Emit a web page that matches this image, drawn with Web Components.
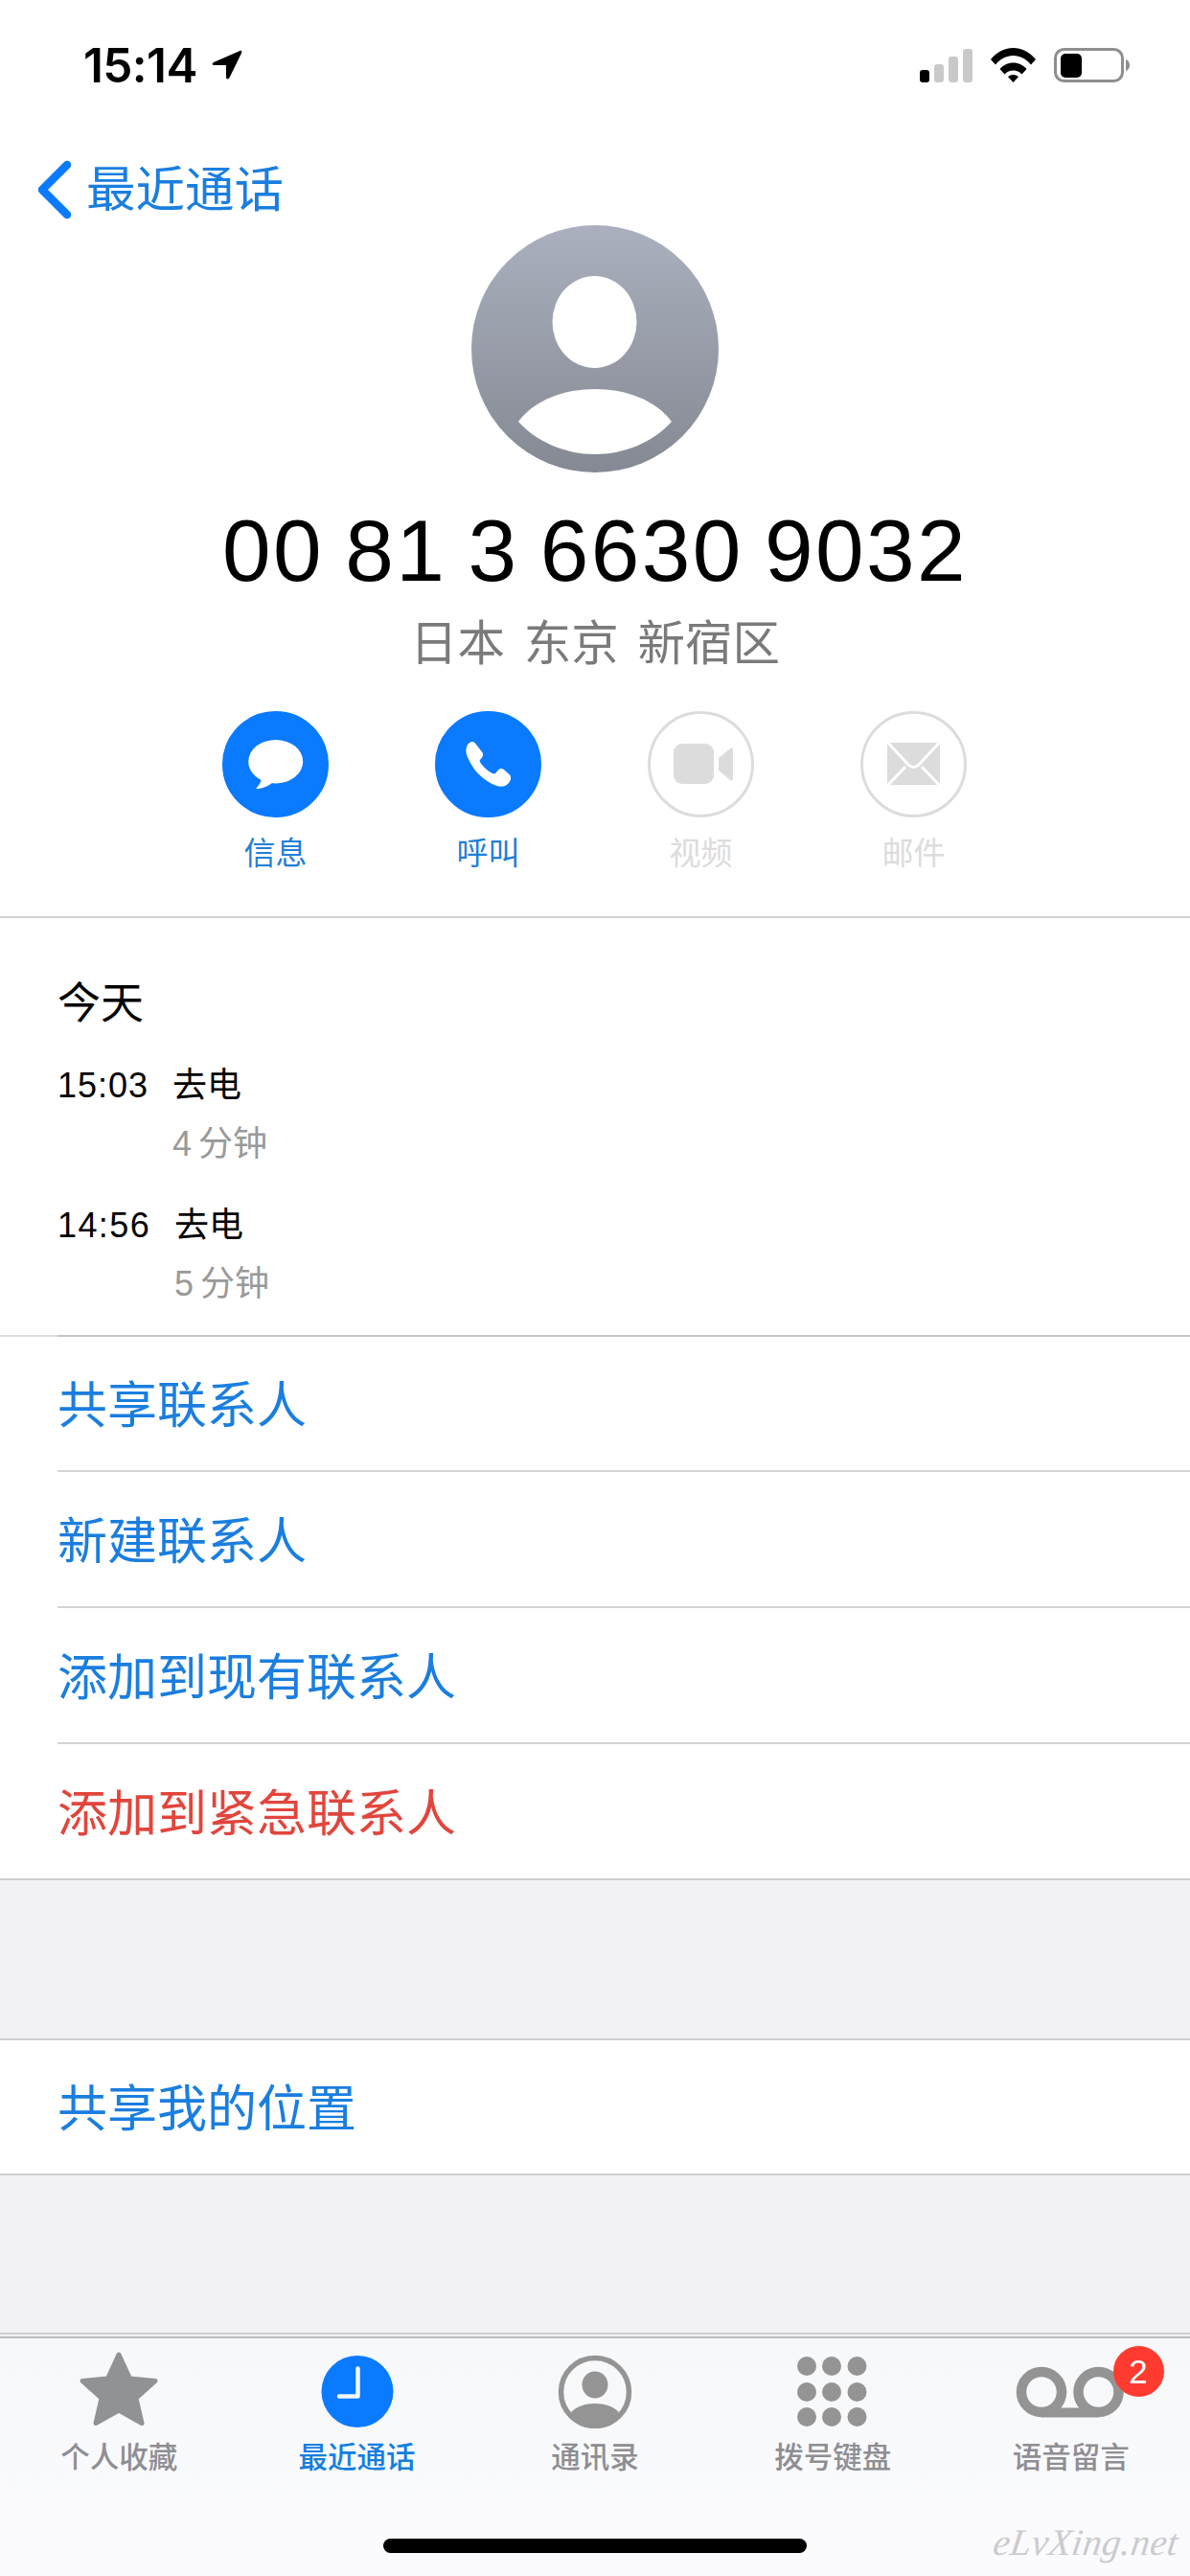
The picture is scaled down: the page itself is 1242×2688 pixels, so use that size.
<!DOCTYPE html>
<html lang="zh-CN">
<head>
<meta charset="utf-8">
<title>Contact</title>
<style>
html,body{margin:0;padding:0;background:#fff}
body{font-family:"Liberation Sans","Noto Sans CJK SC",sans-serif}
</style>
</head>
<body>
<phone-screen>
  <status-bar time="15:14"></status-bar>
  <back-nav>最近通话</back-nav>
  <contact-head number="00 81 3 6630 9032" place="日本 东京 新宿区">
    <action-button label="信息" on>
      <svg viewBox="0 0 111 111" width="111" height="111"><ellipse cx="55.7" cy="52.7" rx="28.5" ry="22.8" fill="#fff"/><path d="M41 68C41 74 38 78 35.5 80C35 81 36 81.5 38 81C43 80.5 48 78 52 75Z" fill="#fff"/></svg>
    </action-button>
    <action-button label="呼叫" on>
      <svg viewBox="0 0 111 111" width="111" height="111"><path fill="#fff" d="M33.5 36C35 32.5 39 30.5 41.5 33L49 42.5C50.5 44.5 50.5 46.5 49 48.5L47 51C46.5 52 46.8 53 47.5 54C51 59 55 62.5 60 65C61.5 65.7 62.5 65.5 63.5 64.5L66 61.5C67.5 59.8 69.5 59.5 71.5 60.8L77.5 66C80 68.5 79.5 72 77 75C73.5 79 69 79.5 64.5 78C50 73 39 61 33.5 47C32 43 32 39.5 33.5 36Z"/></svg>
    </action-button>
    <action-button label="视频">
      <svg viewBox="0 0 111 111" width="111" height="111"><rect x="27" y="34" width="42" height="42" rx="9" fill="#dcdcdc"/><path fill="#dcdcdc" d="M74 49L86 39C88 37.5 89 38.5 89 41V70C89 72.5 88 73.5 86 72L74 62Z"/></svg>
    </action-button>
    <action-button label="邮件">
      <svg viewBox="0 0 111 111" width="111" height="111"><rect x="28" y="33" width="55" height="44" rx="2" fill="#dcdcdc"/><path d="M26 30L50 56Q55.5 61 61 56L85 30M27 79L47 58M84 79L64 58" fill="none" stroke="#fff" stroke-width="3"/></svg>
    </action-button>
  </contact-head>
  <call-log heading="今天">
    <call-row kind="去电"><span slot="time">15:03</span>4 分钟</call-row>
    <call-row kind="去电"><span slot="time" style="letter-spacing:1.4px">14:56</span>5 分钟</call-row>
  </call-log>
  <action-list>
    <list-row>共享联系人</list-row>
    <list-row>新建联系人</list-row>
    <list-row>添加到现有联系人</list-row>
    <list-row danger last>添加到紧急联系人</list-row>
  </action-list>
  <action-list separate>
    <list-row last>共享我的位置</list-row>
  </action-list>
  <tab-bar>
    <tab-item label="个人收藏">
      <svg viewBox="0 0 124 84" width="124" height="84"><path transform="translate(21 4)" fill="#909296" stroke="#909296" stroke-width="5" stroke-linejoin="round" d="M41 3L52.5 28L79 30.5L59 48.5L65 74.5L41 61L17 74.5L23 48.5L3 30.5L29.5 28Z"/></svg>
    </tab-item>
    <tab-item label="最近通话" on>
      <svg viewBox="0 0 124 84" width="124" height="84"><circle cx="62" cy="45.5" r="37.5" fill="#0a7aff"/><path d="M62.5 21.5V50.5H43" fill="none" stroke="#fff" stroke-width="4.5" stroke-linecap="round" stroke-linejoin="round" opacity=".95"/></svg>
    </tab-item>
    <tab-item label="通讯录">
      <svg viewBox="0 0 124 84" width="124" height="84"><circle cx="62" cy="46" r="35.5" fill="none" stroke="#949494" stroke-width="5.5"/><ellipse cx="62" cy="38.5" rx="13.5" ry="14" fill="#949494"/><path fill="#949494" d="M37 67C43 61 52 58 62 58C72 58 81 61 87 67C81 76 72 81 62 81C52 81 43 76 37 67Z"/></svg>
    </tab-item>
    <tab-item label="拨号键盘">
      <svg viewBox="0 0 124 84" width="124" height="84" fill="#949494"><circle cx="35" cy="19" r="10"/><circle cx="61" cy="19" r="10"/><circle cx="87.5" cy="19" r="10"/><circle cx="35" cy="46" r="10"/><circle cx="61" cy="46" r="10"/><circle cx="87.5" cy="46" r="10"/><circle cx="35" cy="72" r="10"/><circle cx="61" cy="72" r="10"/><circle cx="87.5" cy="72" r="10"/></svg>
    </tab-item>
    <tab-item label="语音留言" badge="2">
      <svg viewBox="0 0 124 84" width="124" height="84"><g fill="none" stroke="#949494"><circle cx="31" cy="46" r="21" stroke-width="10.5"/><circle cx="90.5" cy="46" r="21" stroke-width="10.5"/><path d="M31 67.5H90.5" stroke-width="10"/></g></svg>
    </tab-item>
  </tab-bar>
  <home-bar></home-bar>
  <water-mark>eLvXing.net</water-mark>
</phone-screen>

<script>
const CJK = '"Liberation Sans","Noto Sans CJK SC",sans-serif';
function make(name, css, html, setup) {
  customElements.define(name, class extends HTMLElement {
    constructor() {
      super();
      const root = this.attachShadow({ mode: 'open' });
      const t = document.createElement('template');
      t.innerHTML = '<style>' + css + '</style>' + (typeof html === 'function' ? html(this) : html);
      root.appendChild(t.content.cloneNode(true));
    }
    connectedCallback() {
      if (setup) setup(this, this.shadowRoot);
    }
  });
}

make('phone-screen',
  `:host{display:flex;flex-direction:column;position:relative;width:1242px;height:2688px;overflow:hidden;background:#f1f1f6;font-family:${CJK}}`,
  `<slot></slot>`);

make('status-bar',
  `:host{display:flex;justify-content:space-between;align-items:flex-start;height:136px;box-sizing:border-box;padding:50px 62px 0 87px;background:#fff}
   .time{display:flex;align-items:flex-start;gap:15px}
   .t{font:600 49.5px/37px Inter,sans-serif;color:#000;letter-spacing:-.6px}
   .icons{display:flex;gap:19px;align-items:flex-start}
   svg{display:block}`,
  `<div class="time"><span class="t"></span>
    <svg width="33" height="33" viewBox="0 0 33 33"><path fill="#000" d="M29.5 3L2 15C0 16 .5 18 2.5 18L15 18L15 30.5C15 33 17.5 33 18.5 31L31 5.5C32 3.5 31 2.5 29.5 3Z"/></svg></div>
   <div class="icons">
    <svg width="55" height="36" viewBox="0 0 55 36"><rect x="0" y="23" width="10" height="13" rx="3" fill="#000"/><rect x="15" y="17" width="10" height="19" rx="3" fill="#c9c9c9"/><rect x="30" y="9" width="10" height="27" rx="3" fill="#c9c9c9"/><rect x="45" y="1" width="10" height="35" rx="3" fill="#c9c9c9"/></svg>
    <svg width="47" height="36" viewBox="0 0 47 36"><path fill="#000" d="M0 12C6.5 4 15 0 23.5 0C32 0 40.5 4 47 12L42 17.5C37 11.5 30.5 8 23.5 8C16.5 8 10 11.5 5 17.5ZM9.5 22C13 18 18 15.5 23.5 15.5C29 15.5 34 18 37.5 22L32.5 27.5C30 25 27 23.5 23.5 23.5C20 23.5 17 25 14.5 27.5ZM18 30C19.5 28.8 21.5 28 23.5 28C25.5 28 27.5 28.8 29 30L23.5 36Z"/></svg>
    <svg width="80" height="36" viewBox="0 0 80 36"><rect x="1.5" y="1.5" width="70" height="33" rx="9" fill="none" stroke="#8e8e8e" stroke-width="3"/><rect x="7" y="6" width="22" height="25" rx="5" fill="#000"/><path fill="#8e8e8e" d="M75 12C78 13 79 15.5 79 18C79 20.5 78 23 75 24Z"/></svg>
   </div>`,
  (el, r) => { r.querySelector('.t').textContent = el.getAttribute('time'); });

make('back-nav',
  `:host{display:flex;align-items:center;gap:15px;height:99px;box-sizing:border-box;padding:31px 0 6px 38px;background:#fff;color:#1a7ee0;font-size:51.5px;line-height:64px}
   svg{display:block;flex:none}`,
  `<svg width="37" height="62" viewBox="0 0 37 62"><path d="M32 5L6 31L32 57" fill="none" stroke="#0a7aff" stroke-width="8.5" stroke-linecap="round" stroke-linejoin="round"/></svg><slot></slot>`);

make('contact-head',
  `:host{display:block;background:#fff;text-align:center;padding-bottom:46px;border-bottom:2px solid #d2d2d4}
   .avatar{display:block;margin:0 auto}
   .num{margin-top:32px;font-size:91px;line-height:100px;color:#000;letter-spacing:2.4px;word-spacing:-5.5px}
   .place{margin-top:17px;margin-bottom:-1px;font-size:49.5px;line-height:60px;color:#7a7a7a;word-spacing:6px}
   .actions{margin-top:41px;display:grid;grid-template-columns:repeat(4,222px);justify-content:center;padding-right:1px}`,
  `<svg class="avatar" width="258" height="258" viewBox="0 0 258 258">
     <defs><linearGradient id="g" x1="0" y1="0" x2="0" y2="1"><stop offset="0" stop-color="#aab0be"/><stop offset="1" stop-color="#858993"/></linearGradient></defs>
     <circle cx="129" cy="129" r="129" fill="url(#g)"/>
     <ellipse cx="128.5" cy="101" rx="44" ry="48" fill="#fff"/>
     <path fill="#fff" d="M49 205C66 182 97 171 129 171C161 171 192 182 209 205C190 226 160 239 129 239C98 239 68 226 49 205Z"/>
   </svg>
   <div class="num"></div><div class="place"></div><div class="actions"><slot></slot></div>`,
  (el, r) => {
    r.querySelector('.num').textContent = el.getAttribute('number');
    r.querySelector('.place').textContent = el.getAttribute('place');
  });

make('action-button',
  `:host{display:flex;flex-direction:column;align-items:center}
   .c{width:111px;height:111px;border-radius:50%;box-sizing:border-box;border:3px solid #dcdcdc;position:relative;background:#fff}
   :host([on]) .c{background:#0a7aff;border-color:#0a7aff}
   ::slotted(svg){display:block;margin:-3px}
   .l{margin-top:18px;margin-bottom:-1px;font-size:33px;line-height:40px;color:#dcdcdc}
   :host([on]) .l{color:#1f7fd8}`,
  `<div class="c"><slot></slot></div><div class="l"></div>`,
  (el, r) => { r.querySelector('.l').textContent = el.getAttribute('label'); });

make('call-log',
  `:host{display:block;background:#fff;padding:64px 0 22px 60px}
   .h{font-size:45px;line-height:52px;color:#000;margin-bottom:28px}
   .rows{display:flex;flex-direction:column;gap:23px}`,
  `<div class="h"></div><div class="rows"><slot></slot></div>`,
  (el, r) => { r.querySelector('.h').textContent = el.getAttribute('heading'); });

make('call-row',
  `:host{display:flex;gap:25px;font-size:36px;line-height:62px;color:#000}
   ::slotted([slot=time]){letter-spacing:1px}
   .d{color:#999;word-spacing:-3px;margin-top:-1px}`,
  `<div><slot name="time"></slot></div><div><div class="k"></div><div class="d"><slot></slot></div></div>`,
  (el, r) => { r.querySelector('.k').textContent = el.getAttribute('kind'); });

make('action-list',
  `:host{display:block;background:#fff;border-bottom:2px solid #cfcfd3}
   .top{height:2px;margin-bottom:-1px;background:linear-gradient(to right,#dedede 60px,#c6c6c8 60px)}
   :host([separate]){margin-top:165px}
   :host([separate]) .top{background:#cfcfd3}`,
  `<div class="top"></div><slot></slot>`);

make('list-row',
  `:host{display:block;padding-left:60px;font-size:52px;color:#1a7ee0}
   :host([danger]){color:#e2453c}
   .i{display:flex;align-items:center;height:136px;padding-bottom:4px;border-bottom:2px solid #d4d4d6}
   :host([last]) .i{border-bottom:none}`,
  `<div class="i"><slot></slot></div>`);

make('tab-bar',
  `:host{position:relative;margin-top:auto;display:grid;grid-template-columns:repeat(5,248.4px);height:250px;box-sizing:border-box;padding-top:10px;border-top:2px solid #bdbdc1;background:linear-gradient(#f6f8fa,#fbfbfd);align-items:start}
   :host::before{content:"";position:absolute;left:0;right:0;top:-6px;height:2px;background:#cfcfd3}`,
  `<slot></slot>`);

make('tab-item',
  `:host{display:flex;flex-direction:column;align-items:center;position:relative;color:#8e8e93}
   :host([on]){color:#147ee0}
   ::slotted(svg){display:block}
   .l{margin-top:12px;font-size:30.5px;line-height:36px;font-weight:500}
   .b{position:absolute;left:168px;top:-2px;width:53px;height:53px;border-radius:50%;background:#ff3b30;color:#fff;font-size:35px;line-height:53px;text-align:center}
   .b:empty{display:none}`,
  `<slot></slot><div class="l"></div><div class="b"></div>`,
  (el, r) => {
    r.querySelector('.l').textContent = el.getAttribute('label');
    r.querySelector('.b').textContent = el.getAttribute('badge') || '';
  });

make('home-bar',
  `:host{position:absolute;left:400px;top:2649px;width:442px;height:15px;border-radius:8px;background:#000}`,
  ``);

make('water-mark',
  `:host{position:absolute;left:1037px;top:2631px;font:italic 39px/44px "Liberation Serif",serif;color:#cbcbce;letter-spacing:.5px;transform:skewX(-8deg)}`,
  `<slot></slot>`);
</script>
</body>
</html>
